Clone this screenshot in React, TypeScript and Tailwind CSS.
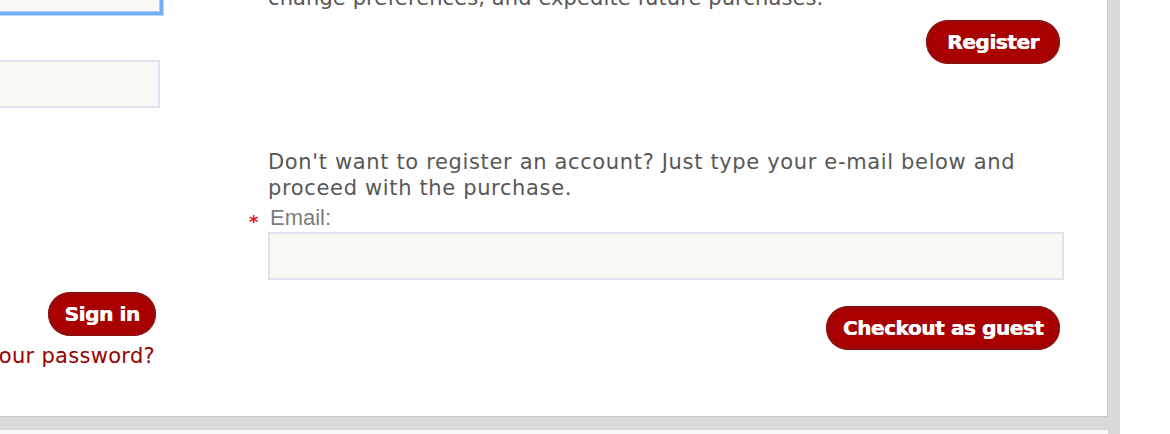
import React from 'react';

const verdana = { fontFamily: '"DejaVu Sans", Verdana, sans-serif' };

function RedButton({ label, className }: { label: string; className: string }) {
  return (
    <button
      className={
        'h-[44px] rounded-full bg-[#a90000] text-white font-bold text-[20px] tracking-[-0.4px] [text-shadow:0.6px_0_0_#fff] shadow-[inset_0_0_3px_1px_#7d1b1b] flex items-center justify-center shrink-0 ' +
        className
      }
      style={verdana}
    >
      {label}
    </button>
  );
}

export default function App() {
  return (
    <div className="w-[1170px] h-[434px] overflow-hidden bg-white">
      <div className="-mt-[41px] w-[1120px] bg-[#d9d9d9] pr-[12px] flex flex-col gap-[13px]">
        {/* Main panel */}
        <div className="h-[458px] w-[1108px] bg-white border-r border-b border-[#c9c9c9] flex">
          {/* Sign in column (cut off on the left) */}
          <div className="w-[160px] shrink-0 flex flex-col items-end">
            <input
              className="mt-[5px] w-[420px] shrink-0 h-[48px] bg-[#f8f8f4] border border-[#a9cdf6] shadow-[0_0_0_3px_#72aef5,0_0_0_4px_#b9d8fa] outline-none"
              readOnly
            />
            <input
              className="mt-[48px] w-[420px] shrink-0 h-[48px] bg-[#f8f8f4] border-2 border-[#dde3ec] outline-none"
              readOnly
            />
            <RedButton label="Sign in" className="mt-[184px] mr-[4px] w-[108px]" />
            <div className="mt-[7px] mr-[5px] flex justify-end whitespace-nowrap">
              <a className="text-[21px] leading-[26px] tracking-[0.3px] text-[#960000] shrink-0" style={verdana}>
                Forgot your password?
              </a>
            </div>
          </div>

          {/* Register / guest column */}
          <div className="ml-[108px] w-[796px] shrink-0 flex flex-col text-[#575757]">
            <p className="text-[21px] leading-[26px] tracking-[0.1px] whitespace-nowrap" style={verdana}>
              Register now to save your details, track your orders,
              <br />
              change preferences, and expedite future purchases.
            </p>
            <RedButton label="Register" className="mt-[9px] mr-[4px] self-end w-[134px]" />

            <p className="mt-[85px] text-[21px] leading-[26px] tracking-[0.65px]" style={verdana}>
              Don't want to register an account? Just type your e-mail below and proceed with the purchase.
            </p>
            <label
              className="relative mt-[4px] ml-[2px] text-[22px] leading-[25px] text-[#7a7e80]"
              style={{ fontFamily: '"Liberation Sans", Arial, sans-serif' }}
            >
              <span
                className="absolute -left-[21px] top-[8px] text-[18px] leading-[18px] font-bold text-[#e8121c]"
                style={verdana}
              >
                *
              </span>
              Email:
            </label>
            <input
              className="mt-[2px] w-[796px] h-[48px] bg-[#f8f8f4] border-2 border-[#dde3ec] outline-none"
              readOnly
            />
            <RedButton label="Checkout as guest" className="mt-[26px] mr-[4px] self-end w-[234px]" />
          </div>
        </div>

        {/* Next panel */}
        <div className="h-[40px] w-[1108px] bg-[#f8f8f8]" />
      </div>
    </div>
  );
}
